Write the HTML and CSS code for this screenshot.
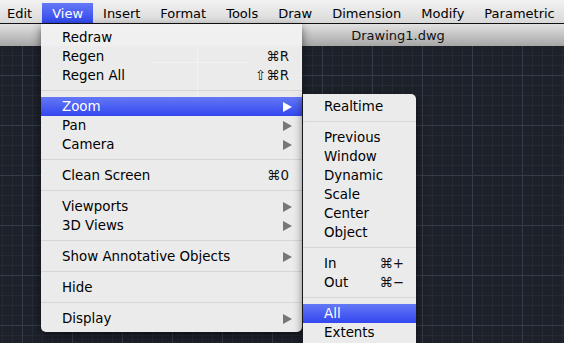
FILE: index.html
```html
<!DOCTYPE html>
<html>
  <head>
    <title>Drawing1.dwg</title>
    <link rel="stylesheet" href="styles.css">
  </head>
  <body>
    <div class="menubar">
      <span class="menu-title">Edit</span>
      <span class="menu-title active">View</span>
      <span class="menu-title">Insert</span>
      <span class="menu-title">Format</span>
      <span class="menu-title">Tools</span>
      <span class="menu-title">Draw</span>
      <span class="menu-title">Dimension</span>
      <span class="menu-title">Modify</span>
      <span class="menu-title">Parametric</span>
    </div>

    <div class="titlebar">Drawing1.dwg</div>

    <div class="canvas">
      <div class="cross-v"></div>
      <div class="cross-h"></div>
    </div>

    <div class="menu view-menu">
      <div class="item"><span>Redraw</span></div>
      <div class="item"><span>Regen</span><span class="key">⌘R</span></div>
      <div class="item"><span>Regen All</span><span class="key">⇧⌘R</span></div>
      <div class="sep"></div>
      <div class="item selected"><span>Zoom</span><span class="arrow"></span></div>
      <div class="item"><span>Pan</span><span class="arrow"></span></div>
      <div class="item"><span>Camera</span><span class="arrow"></span></div>
      <div class="sep"></div>
      <div class="item"><span>Clean Screen</span><span class="key">⌘0</span></div>
      <div class="sep"></div>
      <div class="item"><span>Viewports</span><span class="arrow"></span></div>
      <div class="item"><span>3D Views</span><span class="arrow"></span></div>
      <div class="sep"></div>
      <div class="item"><span>Show Annotative Objects</span><span class="arrow"></span></div>
      <div class="sep"></div>
      <div class="item"><span>Hide</span></div>
      <div class="sep"></div>
      <div class="item"><span>Display</span><span class="arrow"></span></div>
    </div>

    <div class="menu zoom-menu">
      <div class="item"><span>Realtime</span></div>
      <div class="sep"></div>
      <div class="item"><span>Previous</span></div>
      <div class="item"><span>Window</span></div>
      <div class="item"><span>Dynamic</span></div>
      <div class="item"><span>Scale</span></div>
      <div class="item"><span>Center</span></div>
      <div class="item"><span>Object</span></div>
      <div class="sep"></div>
      <div class="item"><span>In</span><span class="key">⌘+</span></div>
      <div class="item"><span>Out</span><span class="key">⌘−</span></div>
      <div class="sep"></div>
      <div class="item selected"><span>All</span></div>
      <div class="item"><span>Extents</span></div>
    </div>
  </body>
</html>
```

FILE: styles.css
```css
body {
  margin: 0;
  width: 564px;
  height: 343px;
  overflow: hidden;
  position: relative;
  font-family: "DejaVu Sans", sans-serif;
  font-size: 13.4px;
  color: black;
  background-color: #1d212a;
}

.menubar {
  display: flex;
  height: 23px;
  border-bottom: solid 1px #111;
  background: linear-gradient(#f2f2f2, #d9d9d9);
  font-size: 13px;
}

.menu-title {
  display: flex;
  align-items: center;
  padding: 0 10px;
  margin-top: 3px;
  height: 20px;
}

.menu-title:first-child {
  padding-left: 7px;
  padding-right: 10px;
}

.menu-title.active {
  color: white;
  background: linear-gradient(#6478f6, #3247ee);
}

.titlebar {
  height: 22px;
  display: flex;
  align-items: center;
  justify-content: center;
  padding-left: 232px;
  background: linear-gradient(#e2e2e2, #a6a6a6);
  color: #111;
  font-size: 13px;
}

.canvas {
  position: relative;
  height: 297px;
  background-color: #1d212a;
  background-image:
    linear-gradient(to right, #363b45 1px, transparent 1px),
    linear-gradient(to bottom, #363b45 1px, transparent 1px),
    linear-gradient(to right, #252a33 1px, transparent 1px),
    linear-gradient(to bottom, #252a33 1px, transparent 1px);
  background-size: 50px 50px, 50px 50px, 10px 10px, 10px 10px;
  background-position: 22px 0, 0 29px, 2px 0, 0 9px;
}

.cross-v {
  position: absolute;
  left: 197px;
  top: 0;
  width: 1px;
  height: 60px;
  background-color: white;
}

.cross-h {
  position: absolute;
  left: 150px;
  top: 16px;
  width: 100px;
  height: 1px;
  background-color: white;
}

.menu {
  position: absolute;
  background-color: rgba(242, 242, 242, 0.97);
  box-shadow: 0 3px 10px rgba(0, 0, 0, 0.55);
}

.view-menu {
  left: 41px;
  top: 24px;
  width: 261px;
  padding: 4px 0;
  border-radius: 0 0 5px 5px;
}

.zoom-menu {
  left: 303px;
  top: 94px;
  width: 113px;
  padding: 3px 0 10px 0;
  border-radius: 0 5px 0 0;
}

.item {
  display: flex;
  align-items: center;
  justify-content: space-between;
  height: 19px;
  padding: 0 13px 0 21px;
}

.item.selected {
  color: white;
  background: linear-gradient(#6478f6, #3247ee);
}

.zoom-menu .item {
  padding-right: 12px;
}

.key {
  color: #111;
}

.sep {
  height: 1px;
  margin: 5px 0 6px 0;
  background-color: #d6d6d6;
}

.arrow {
  width: 0;
  height: 0;
  margin-right: -3px;
  border-left: solid 9px #777;
  border-top: solid 5px transparent;
  border-bottom: solid 5px transparent;
}

.selected .arrow {
  border-left-color: white;
}
```
